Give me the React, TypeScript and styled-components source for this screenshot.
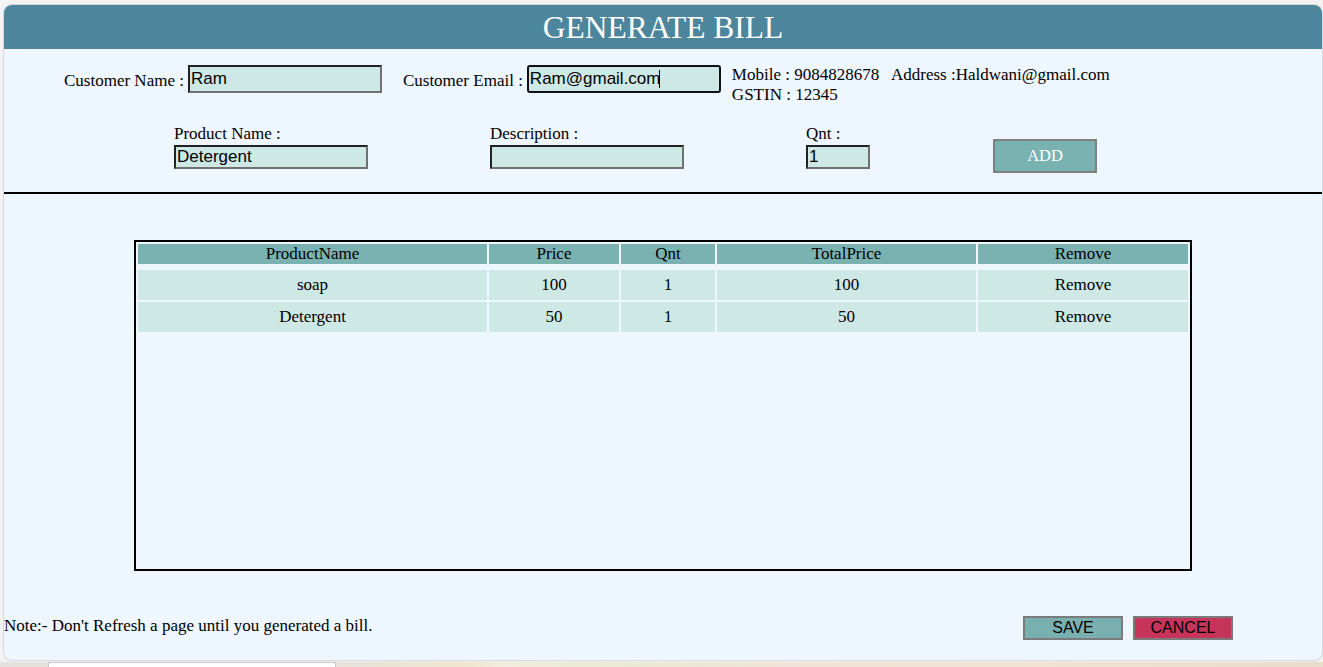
import React from "react";
import styled, { createGlobalStyle } from "styled-components";

const GlobalStyle = createGlobalStyle`
  html, body { margin: 0; padding: 0; }
  body {
    background: #f3f3f3;
    font-family: "Liberation Serif", "Times New Roman", serif;
    font-size: 17px;
    color: #000;
    overflow: hidden;
  }
  * { box-sizing: border-box; }
`;

const Page = styled.div`
  width: 1323px;
  height: 667px;
  padding-top: 5px;
  display: flex;
  flex-direction: column;
`;

const Card = styled.div`
  margin: 0 1px 0 4px;
  background: #eef6ff;
  border-radius: 8px;
  box-shadow: 0 0 0 1px #d6d9dd, 0 1px 1px #c8c8c8;
  padding-bottom: 20px;
  display: flex;
  flex-direction: column;
`;

const Header = styled.div`
  height: 44px;
  background: #4d869c;
  border-radius: 8px 8px 0 0;
  color: #fff;
  text-align: center;
  font-size: 31.5px;
  line-height: 46px;
`;

const CustomerRow = styled.div`
  display: flex;
  align-items: flex-start;
  margin-top: 16px;
  padding-left: 60px;
`;

const InlineField = styled.div<{ $gapAfter: number }>`
  display: flex;
  align-items: center;
  gap: 4px;
  margin-right: ${(p) => p.$gapAfter}px;
`;

const Label = styled.span`
  white-space: nowrap;
  line-height: 20px;
`;

const InlineLabel = styled(Label)`
  padding-top: 4px;
`;

const TextInput = styled.input<{ $w: number; $h: number; $focused?: boolean }>`
  width: ${(p) => p.$w}px;
  height: ${(p) => p.$h}px;
  background: #cee8e5;
  font-family: "Liberation Sans", Arial, sans-serif;
  font-size: 17px;
  color: #000;
  padding: 0 1px;
  margin: 0;
  border-width: 2px;
  border-style: solid;
  border-color: ${(p) =>
    p.$focused ? "#111 #111 #111 #111" : "#222 #707070 #707070 #222"};
  border-radius: ${(p) => (p.$focused ? "3px" : "0")};
  outline: none;
`;

const CaretWrap = styled.div`
  position: relative;
  display: flex;
`;

const Caret = styled.span`
  position: absolute;
  left: 132px;
  top: 5px;
  width: 1px;
  height: 18px;
  background: #000;
`;

const Info = styled.div`
  line-height: 20px;
  white-space: pre;
`;

const ProductRow = styled.div`
  display: flex;
  align-items: flex-start;
  margin-top: 19px;
  padding-left: 170px;
`;

const StackField = styled.div<{ $w: number }>`
  width: ${(p) => p.$w}px;
  display: flex;
  flex-direction: column;
  align-items: flex-start;
  gap: 1px;
`;

const AddButton = styled.button`
  margin-top: 15px;
  width: 104px;
  height: 34px;
  background: #7ab2b2;
  border: 2px solid #808080;
  color: #fff;
  font-family: "Liberation Serif", "Times New Roman", serif;
  font-size: 16.5px;
  padding: 0;
`;

const Divider = styled.div`
  margin-top: 19px;
  height: 2px;
  background: #000;
`;

const TableBox = styled.div`
  margin: 46px 0 0 130px;
  width: 1058px;
  height: 331px;
  border: 2px solid #000;
`;

const Table = styled.table`
  border-collapse: separate;
  border-spacing: 2px;
  width: 1054px;
  table-layout: fixed;
`;

const HeadCell = styled.th<{ $w: number }>`
  width: ${(p) => p.$w}px;
  background: #7ab2b2;
  background-clip: padding-box;
  border-bottom: 4px solid transparent;
  font-weight: normal;
  line-height: 20px;
  height: 24px;
  padding: 0;
  text-align: center;
`;

const Cell = styled.td`
  background: #cee8e5;
  height: 30px;
  padding: 0;
  text-align: center;
  line-height: 20px;
`;

const Footer = styled.div`
  margin-top: 45px;
  display: flex;
  justify-content: space-between;
  align-items: flex-start;
  padding-right: 89px;
`;

const Note = styled.div`
  line-height: 20px;
`;

const ButtonGroup = styled.div`
  display: flex;
  gap: 10px;
`;

const ActionButton = styled.button<{ $bg: string }>`
  width: 100px;
  height: 24px;
  background: ${(p) => p.$bg};
  border: 2px solid #7b7b7b;
  color: #000;
  font-family: "Liberation Sans", Arial, sans-serif;
  font-size: 16px;
  padding: 0;
  line-height: 18px;
`;

const BottomStrip = styled.div`
  margin-top: 2px;
  height: 6px;
  display: flex;
  background: linear-gradient(90deg, #e4e1de 0%, #e6e2dc 25%, #efe6cc 35%, #f2ecde 38%, #e9ecd2 45%, #f0e4d8 60%, #efe3d0 80%, #e8dccb 100%);
`;

const StripBox = styled.div`
  margin-left: 48px;
  width: 288px;
  background: #fff;
  border: 1px solid #c8c8c8;
  border-bottom: none;
`;

const columns = [
  { name: "ProductName", w: 349 },
  { name: "Price", w: 130 },
  { name: "Qnt", w: 94 },
  { name: "TotalPrice", w: 259 },
  { name: "Remove", w: 210 },
];

const items = [
  { name: "soap", price: 100, qnt: 1 },
  { name: "Detergent", price: 50, qnt: 1 },
];

export default function App() {
  return (
    <>
      <GlobalStyle />
      <Page>
        <Card>
          <Header>GENERATE BILL</Header>

          <CustomerRow>
            <InlineField $gapAfter={21}>
              <InlineLabel>Customer Name :</InlineLabel>
              <TextInput $w={194} $h={28} defaultValue="Ram" />
            </InlineField>
            <InlineField $gapAfter={11}>
              <InlineLabel>Customer Email :</InlineLabel>
              <CaretWrap>
                <TextInput $w={194} $h={28} $focused defaultValue="Ram@gmail.com" />
                <Caret />
              </CaretWrap>
            </InlineField>
            <Info>
              {"Mobile : 9084828678   Address :Haldwani@gmail.com\nGSTIN : 12345"}
            </Info>
          </CustomerRow>

          <ProductRow>
            <StackField $w={316}>
              <Label>Product Name :</Label>
              <TextInput $w={194} $h={24} defaultValue="Detergent" />
            </StackField>
            <StackField $w={316}>
              <Label>Description :</Label>
              <TextInput $w={194} $h={24} defaultValue="" />
            </StackField>
            <StackField $w={187}>
              <Label>Qnt :</Label>
              <TextInput $w={64} $h={24} defaultValue="1" />
            </StackField>
            <AddButton>ADD</AddButton>
          </ProductRow>

          <Divider />

          <TableBox>
            <Table>
              <thead>
                <tr>
                  {columns.map((c) => (
                    <HeadCell key={c.name} $w={c.w}>
                      {c.name}
                    </HeadCell>
                  ))}
                </tr>
              </thead>
              <tbody>
                {items.map((it) => (
                  <tr key={it.name}>
                    <Cell>{it.name}</Cell>
                    <Cell>{it.price}</Cell>
                    <Cell>{it.qnt}</Cell>
                    <Cell>{it.price * it.qnt}</Cell>
                    <Cell>Remove</Cell>
                  </tr>
                ))}
              </tbody>
            </Table>
          </TableBox>

          <Footer>
            <Note>Note:- Don't Refresh a page until you generated a bill.</Note>
            <ButtonGroup>
              <ActionButton $bg="#7aafaf">SAVE</ActionButton>
              <ActionButton $bg="#c73459">CANCEL</ActionButton>
            </ButtonGroup>
          </Footer>
        </Card>
        <BottomStrip>
          <StripBox />
        </BottomStrip>
      </Page>
    </>
  );
}
